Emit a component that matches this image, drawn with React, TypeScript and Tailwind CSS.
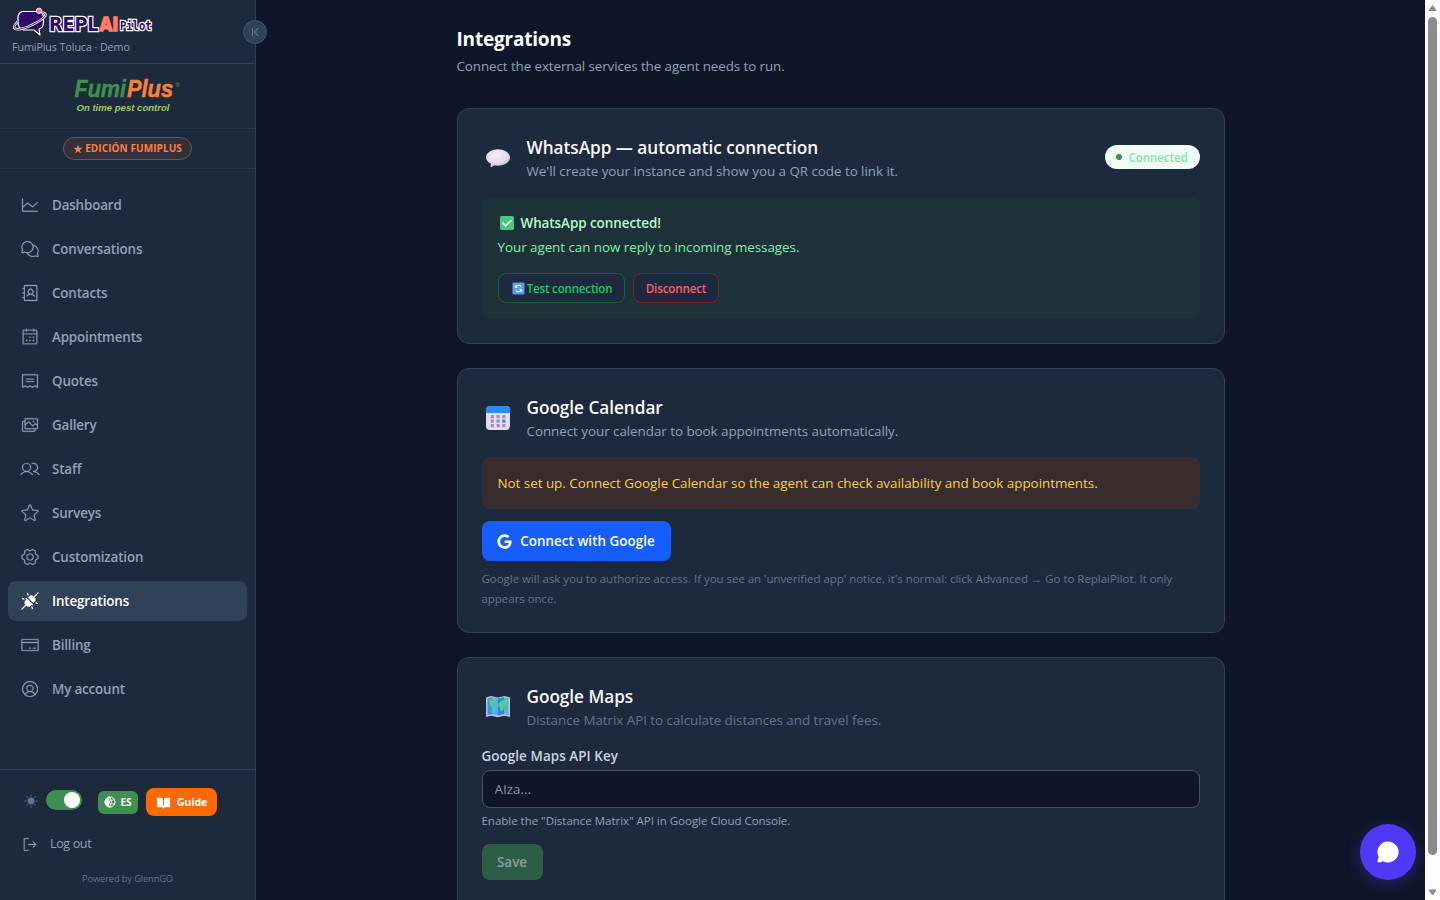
import type { ReactNode } from 'react';
import { FaGoogle } from 'react-icons/fa6';
import {
  PiAddressBookLight,
  PiBookOpenFill,
  PiCalendarDotsLight,
  PiCaretLineLeftLight,
  PiChartLineLight,
  PiChatCircleFill,
  PiChatsCircleLight,
  PiCreditCardLight,
  PiGearSixLight,
  PiImagesLight,
  PiPlugsConnectedFill,
  PiReceiptLight,
  PiSignOutLight,
  PiStarLight,
  PiSunFill,
  PiUserCircleLight,
  PiUsersLight,
} from 'react-icons/pi';

const nav = [
  { label: 'Dashboard', Icon: PiChartLineLight },
  { label: 'Conversations', Icon: PiChatsCircleLight },
  { label: 'Contacts', Icon: PiAddressBookLight },
  { label: 'Appointments', Icon: PiCalendarDotsLight },
  { label: 'Quotes', Icon: PiReceiptLight },
  { label: 'Gallery', Icon: PiImagesLight },
  { label: 'Staff', Icon: PiUsersLight },
  { label: 'Surveys', Icon: PiStarLight },
  { label: 'Customization', Icon: PiGearSixLight },
  { label: 'Integrations', Icon: PiPlugsConnectedFill, active: true },
  { label: 'Billing', Icon: PiCreditCardLight },
  { label: 'My account', Icon: PiUserCircleLight },
];

function ReplaiLogo() {
  return (
    <svg width="160" height="30" viewBox="0 0 160 30" className="block">
      <g stroke="#fff" strokeLinejoin="round">
        <path d="M10 4.5h17q4.500 1 4.500 7v4q0 5.500-4.500 6.500l1 6-6-5H11.500Q6 21.500 6 15.500V11Q6 6 10 4.500Z" fill="#2f0a6b" strokeWidth="1.200" />
        <path d="M6 14.500C1.500 18 .5 22 5 22.300c7 .4 24-8 28-13 1.500-2.500-.5-4-3.500-3.300" fill="none" strokeWidth="2.400" />
        <path d="M6 14.500C1.500 18 .5 22 5 22.300c7 .4 24-8 28-13 1.500-2.500-.5-4-3.500-3.300" fill="none" stroke="#2f0a6b" strokeWidth=".9" />
        <circle cx="27" cy="3.800" r="2.700" fill="#ff7c62" strokeWidth=".8" />
      </g>
      <g fontFamily="DejaVu Sans, sans-serif" fontWeight="700" strokeLinejoin="miter" paintOrder="stroke">
        <text x="37" y="23.500" fontSize="19.500" stroke="#fff" strokeWidth="2.600" fill="#2f0a6b" textLength="49.500" lengthAdjust="spacingAndGlyphs">REPL</text>
        <text x="87.500" y="23.500" fontSize="19.500" stroke="#ff7c62" strokeWidth="1.600" fill="#ff7c62" textLength="19" lengthAdjust="spacingAndGlyphs">AI</text>
        <text x="108" y="23.300" fontSize="12.500" fontFamily="DejaVu Sans Mono, monospace" stroke="#fff" strokeWidth="2.600" fill="#2f0a6b" textLength="31.500" lengthAdjust="spacingAndGlyphs">Pilot</text>
      </g>
    </svg>
  );
}

function Globe() {
  return (
    <svg width="12" height="12" viewBox="0 0 12 12" fill="none" stroke="#fff">
      <circle cx="6" cy="6" r="5" />
      <path d="M6 1a5 5 0 0 0 0 10L4.500 8.500 6 6 4.700 4Z" fill="#fff" />
      <path d="M6 1q3 5 0 10M6 4.200h4.500M6 7.800h4.500" strokeWidth=".8" />
    </svg>
  );
}

function SpeechBubble() {
  return (
    <svg width="32" height="32" viewBox="0 0 32 32">
      <defs>
        <radialGradient id="bubble" cx=".45" cy=".35" r=".7">
          <stop offset="0" stopColor="#f5effa" />
          <stop offset=".65" stopColor="#e4d8ec" />
          <stop offset="1" stopColor="#bda9cf" />
        </radialGradient>
      </defs>
      <path d="M16 7.200c6.800 0 12 3.700 12 8.300s-5.200 8.200-12 8.200c-1.300 0-2.500-.1-3.600-.4-1.200 1.100-2.500 1.800-3.400 1.800-.6 0-.7-.6-.5-1.200.3-.8.400-1.400.3-2.300C5.900 20.200 4 18 4 15.500c0-4.600 5.200-8.300 12-8.300Z" fill="url(#bubble)" />
    </svg>
  );
}

function CalendarIcon() {
  return (
    <svg width="32" height="32" viewBox="0 0 32 32">
      <rect x="4" y="4" width="24" height="24" rx="4" fill="#e5dcf0" />
      <path d="M4 11V8a4 4 0 0 1 4-4h16a4 4 0 0 1 4 4v3Z" fill="#2f8af0" />
      {[13, 17.500, 22].map((y) =>
        [8.700, 14.500, 20.200].map((x) => (
          <rect key={`${x}-${y}`} x={x} y={y} width="3.200" height="3.200" rx=".6" fill={x > 20 && y === 17.500 ? '#2f8af0' : '#a58fb4'} />
        )),
      )}
    </svg>
  );
}

function MapIcon() {
  return (
    <svg width="32" height="32" viewBox="0 0 32 32">
      <path d="M4 6.500l5-1.500 7 1.500L22.500 5 28 6.500V26l-5.500-1.300L16 26.300 9 24.700 4 26Z" fill="#c7bddc" />
      <path d="M5.500 7.500 10 6.200V23l-4.500 1.200Z" fill="#3696e8" />
      <path d="m10 6.200 6 1.400v16.800L10 23Z" fill="#4bb3f2" />
      <path d="m16 7.600 6-1.400V23l-6 1.400Z" fill="#2f86dc" />
      <path d="m22 6.200 4.500 1.300v16.700L22 23Z" fill="#4bb3f2" />
      <path d="m7 9 5-1 2.500 1.300-1 2.700-2.500 1 .5 2 2 1-1 4-1.500 1-1-4.500L8 14Zm10 3 3-3 5-.6v4l-1.500 3.600-1.500-.5-1 4-2.500 1-.5-4.500-2-1Zm5.500 7.500 2.500-.7V21l-2.500.5Z" fill="#55cf86" />
    </svg>
  );
}

function Card({ icon, title, desc, muted, badge, children }: { icon: ReactNode; title: ReactNode; desc: ReactNode; muted?: boolean; badge?: ReactNode; children: ReactNode }) {
  return (
    <section className="rounded-xl border border-slate-700 bg-slate-800 p-6">
      <div className="mb-4 flex h-12 items-center justify-between">
        <div className="flex items-center gap-[13px]">
          <div className="mt-0.5 w-8">{icon}</div>
          <div className="pt-px">
            <h2 className="text-[17.2px] leading-7 font-semibold tracking-[-0.03px] whitespace-nowrap text-slate-50">{title}</h2>
            <p className={`-mt-px text-[13.4px] leading-5 tracking-[-0.04px] whitespace-nowrap ${muted ? 'text-slate-500' : 'text-slate-400'}`}>{desc}</p>
          </div>
        </div>
        {badge}
      </div>
      {children}
    </section>
  );
}

function Sidebar() {
  return (
    <aside className="relative flex h-full w-64 shrink-0 flex-col border-r border-slate-700 bg-slate-800">
      <div className="h-16 border-b border-slate-700 pt-[7px] pl-3">
        <ReplaiLogo />
        <p className="mt-0.5 text-[10.7px] leading-4 font-medium tracking-[-0.07px] text-slate-400">FumiPlus Toluca · Demo</p>
      </div>
      <button className="absolute top-5 -right-3 flex size-6 items-center justify-center rounded-full border border-slate-600 bg-slate-700 text-slate-400">
        <PiCaretLineLeftLight size={12} />
      </button>

      <div className="flex h-[65px] justify-center border-b border-slate-700/50 pt-3">
        <svg width="110" height="40" viewBox="0 0 110 40" fontFamily="Liberation Sans, Arial, sans-serif" fontStyle="italic" fontWeight="700">
          <text x="1.500" y="21" fontSize="24" fill="#3c914c" stroke="#3c914c" strokeWidth=".5" textLength="51.500" lengthAdjust="spacingAndGlyphs">Fumi</text>
          <text x="54" y="21" fontSize="24" fill="#f78339" stroke="#f78339" strokeWidth=".5" textLength="46" lengthAdjust="spacingAndGlyphs">Plus</text>
          <text x="102.500" y="11" fontSize="6" fill="#3c914c">®</text>
          <text x="3.500" y="35" fontSize="9.500" fill="#9ac96b" textLength="93" lengthAdjust="spacingAndGlyphs">On time pest control</text>
        </svg>
      </div>

      <div className="flex h-10 items-center justify-center border-b border-slate-700/50">
        <span className="flex h-[23px] w-[129px] items-center justify-center gap-0.5 rounded-full border border-[#80503c] bg-[#33303d] text-[10px] font-bold tracking-[0.08px] whitespace-nowrap text-[#fb8140]">
          <svg width="10" height="10" viewBox="0 0 10 10" fill="currentColor">
            <path d="m5 .5 1.100 3.300h3.500L6.800 5.900l1 3.400L5 7.200 2.200 9.300l1-3.400L.4 3.800h3.500Z" />
          </svg>
          EDICIÓN FUMIPLUS
        </span>
      </div>

      <nav className="flex flex-1 flex-col gap-1 px-2 pt-4">
        {nav.map(({ label, Icon, active }) => (
          <a key={label} className={`flex h-10 items-center gap-3 rounded-lg px-3 text-[13.4px] font-semibold ${active ? 'bg-[#314158] tracking-[-0.15px] text-white' : 'tracking-[-0.16px] text-slate-400'}`}>
            <Icon size={20} stroke="currentColor" strokeWidth={active ? 0 : 3} />
            <span>{label}</span>
          </a>
        ))}
      </nav>

      <div className="h-[131px] border-t border-slate-700 pt-[18px]">
        <div className="flex h-7 items-center pl-6">
          <PiSunFill size={14} className="-mt-0.5 text-slate-500" />
          <span className="-mt-1 ml-2 flex h-5 w-9 items-center justify-end rounded-full bg-[#3d9050] px-0.5">
            <span className="size-4 rounded-full bg-white" />
          </span>
          <button className="ml-4 flex h-[23px] w-10 items-center justify-center gap-1 rounded-md bg-[#3d9050] text-[10px] font-bold text-white">
            <Globe />
            ES
          </button>
          <button className="ml-2 flex h-7 w-[71px] items-center justify-center gap-1.5 rounded-lg bg-[#ff6900] text-[10.700px] font-bold tracking-[-0.1px] text-white">
            <PiBookOpenFill size={15} />
            Guide
          </button>
        </div>
        <div className="mt-[18px] flex h-5 items-center gap-3 pl-[21px] text-slate-400">
          <PiSignOutLight size={17} stroke="currentColor" strokeWidth={4} />
          <span className="text-[12.500px] tracking-[-0.35px]">Log out</span>
        </div>
        <p className="mt-[17px] text-center text-[9.300px] leading-4 tracking-[-0.13px] text-slate-500">
          Powered by <span className="font-medium">GlennGO</span>
        </p>
      </div>
    </aside>
  );
}

export default function App() {
  return (
    <div className="relative flex h-screen overflow-hidden bg-[#0e1729] font-['Open_Sans','Noto_Sans',sans-serif]">
      <Sidebar />
      <main className="flex-1 overflow-hidden pt-6">
        <div className="mx-auto w-[768px]">
          <h1 className="pt-px text-[19px] leading-[28px] font-bold tracking-[-0.2px] text-white">Integrations</h1>
          <p className="mt-[3px] text-[13.4px] leading-5 tracking-[-0.09px] text-slate-400">Connect the external services the agent needs to run.</p>

          <div className="mt-8 flex flex-col gap-6">
            <Card
              icon={<SpeechBubble />}
              title="WhatsApp — automatic connection"
              desc="We'll create your instance and show you a QR code to link it."
              badge={
                <span className="flex h-6 w-[95px] items-center justify-center gap-1.5 rounded-full bg-green-50 text-[11.6px] font-semibold tracking-[-0.1px] text-[#85e6a5]">
                  <span className="size-1.5 rounded-full bg-[#3d9050]" />
                  <span className="pt-px">Connected</span>
                </span>
              }
            >
              <div className="rounded-lg bg-[#1d3238] p-4 text-[13.4px] leading-5">
                <p className="flex items-center gap-[5px] font-semibold tracking-[-0.03px] text-green-200">
                  <svg width="18" height="18" viewBox="0 0 18 18">
                    <rect x="2" y="2" width="14" height="14" rx="1.500" fill="#46c983" />
                    <path d="m5 9.200 2.700 2.700L13 6.600" fill="none" stroke="#fff" strokeWidth="1.700" strokeLinecap="round" strokeLinejoin="round" />
                  </svg>
                  WhatsApp connected!
                </p>
                <p className="mt-1 tracking-[-0.04px] text-[#7bf1a8]">Your agent can now reply to incoming messages.</p>
                <div className="mt-4 flex gap-2 text-[11.6px] font-semibold">
                  <button className="flex h-[30px] w-[127px] items-center justify-center gap-0.5 rounded-lg border border-[#0d6633] bg-slate-800 pt-px pl-0.5 tracking-[-0.2px] whitespace-nowrap text-[#16c866]">
                    <svg width="13" height="13" viewBox="0 0 13 13">
                      <rect x=".5" y=".5" width="12" height="12" rx="1" fill="#5b9bf0" />
                      <path d="M3.300 5.500v-2m0 2h2M3.700 5.200a3 3 0 0 1 5.300-.7M9.700 7.500v2m0-2h-2m1.600.3a3 3 0 0 1-5.300.7" fill="none" stroke="#fff" strokeWidth="1.200" />
                    </svg>
                    Test connection
                  </button>
                  <button className="h-[30px] w-[86px] rounded-lg border border-[#8b1825] bg-slate-800 pt-px pl-px tracking-[-0.15px] text-[#f8626b]">Disconnect</button>
                </div>
              </div>
            </Card>

            <Card icon={<CalendarIcon />} title="Google Calendar" desc="Connect your calendar to book appointments automatically.">
              <div className="rounded-lg bg-[#392c2e] p-4 text-[13.4px] leading-5 tracking-[-0.015px] whitespace-nowrap text-[#ffd230]">
                Not set up. Connect Google Calendar so the agent can check availability and book appointments.
              </div>
              <button className="mt-3 flex h-10 w-[189px] items-center justify-center gap-2 rounded-lg bg-[#155dfc] text-[13.4px] font-semibold tracking-[0.04px] whitespace-nowrap text-white">
                <FaGoogle size={15} />
                Connect with Google
              </button>
              <p className="mt-2 -mb-px text-[11.5px] leading-5 tracking-[-0.033px] text-slate-500">
                Google will ask you to authorize access. If you see an 'unverified app' notice, it's normal: click Advanced → Go to ReplaiPilot. It only
                <br />
                appears once.
              </p>
            </Card>

            <Card icon={<MapIcon />} title="Google Maps" desc="Distance Matrix API to calculate distances and travel fees." muted>
              <label className="block text-[13.4px] leading-5 font-semibold tracking-[0.08px] text-slate-300">Google Maps API Key</label>
              <input className="mt-1 block h-[38px] w-full rounded-lg border border-slate-600 bg-[#0e1729] px-3 text-[13.4px] placeholder:text-[#8b919c]" placeholder="AIza..." />
              <p className="mt-1 text-[11.5px] leading-[18px] tracking-[-0.02px] text-slate-400">Enable the "Distance Matrix" API in Google Cloud Console.</p>
              <button className="mt-3.5 mb-2 block h-9 w-[61px] rounded-lg bg-[#2d5d46] text-[13.4px] font-semibold text-[#8e9f9c]">Save</button>
            </Card>
          </div>
        </div>
      </main>
      <div className="flex w-[15px] shrink-0 flex-col items-center bg-[#fcfcfc]">
        <svg width="15" height="17" viewBox="0 0 15 17">
          <path d="m7.500 5.500 3.500 5H4Z" fill="#8b8b8b" stroke="#8b8b8b" strokeLinejoin="round" />
        </svg>
        <div className="h-[838px] w-[9px] rounded-full bg-[#8b8b8b]" />
        <svg className="mt-auto" width="15" height="17" viewBox="0 0 15 17">
          <path d="m7.500 12 3.500-5H4Z" fill="#8b8b8b" stroke="#8b8b8b" strokeLinejoin="round" />
        </svg>
      </div>
      <button className="absolute right-6 bottom-5 flex size-14 items-center justify-center rounded-full bg-[#4f39f6] text-white shadow-[0_4px_14px_rgba(79,57,246,0.35)]">
        <PiChatCircleFill size={26} />
      </button>
    </div>
  );
}
